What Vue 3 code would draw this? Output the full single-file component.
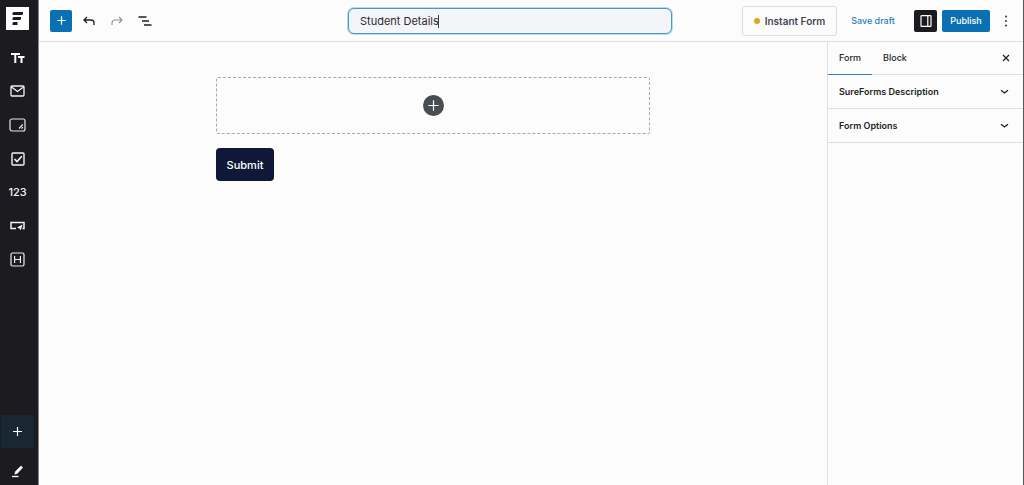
<script setup>
import { ref } from 'vue'

const title = ref('Student Details')
const tabs = ['Form', 'Block']
const activeTab = ref('Form')
const panels = ['SureForms Description', 'Form Options']
</script>

<template>
  <div class="editor">
    <aside class="rail">
      <a class="logo" href="#" aria-label="SureForms">
        <svg width="23" height="23" viewBox="0 0 23 23">
          <path d="M7.5 5h9.500v2l-1 1h-9.500v-2zM7.500 10h7.500v2l-1 1h-7.500v-2zM7.500 15h4v3h-5v-2z" fill="#1b1b20" />
        </svg>
      </a>
      <nav class="blocks" aria-label="Blocks">
        <button type="button" aria-label="Text">
          <svg width="14" height="12" viewBox="0 0 14 12" fill="none" stroke="#fff" stroke-width="2">
            <path d="M0 2h9M4.300 2v9M7 5h6.500M10.500 5v6" />
          </svg>
        </button>
        <button type="button" aria-label="Email">
          <svg width="15" height="12" viewBox="0 0 15 12" fill="none" stroke="#f4f4f4" stroke-width="1.300">
            <rect x="1" y="1" width="13" height="10" rx="1" />
            <path d="M1.200 1.800l6.300 4.600 6.300-4.600" />
          </svg>
        </button>
        <button type="button" aria-label="Textarea">
          <svg width="17" height="14" viewBox="0 0 17 14" fill="none" stroke="#e8e8e8" stroke-width="1.200">
            <rect x="1" y="1" width="15" height="12" rx="2" />
            <path d="M10 10.500l3.800-4M12.500 10.700l1.400-1.500" />
          </svg>
        </button>
        <button type="button" aria-label="Checkbox">
          <svg width="14" height="14" viewBox="0 0 14 14" fill="none" stroke="#f4f4f4" stroke-width="1.400">
            <rect x="1" y="1" width="12" height="12" rx="1" />
            <path d="M3.500 7l2.500 2.600 4.800-5.400" stroke-width="1.600" />
          </svg>
        </button>
        <button type="button" class="digits">123</button>
        <button type="button" aria-label="Button">
          <svg width="15" height="10" viewBox="0 0 15 10" fill="none" stroke="#f4f4f4" stroke-width="1.500">
            <path d="M6 7.500H1V1.500h13v6h-1.500" />
            <path d="M7 6.500L12.500 3.500 10.800 9.300 9.500 7.500z" fill="#f4f4f4" stroke="none" />
          </svg>
        </button>
        <button type="button" aria-label="Heading">
          <svg width="15" height="15" viewBox="0 0 15 15" fill="none" stroke="#eee" stroke-width="1.200">
            <rect x="1" y="1" width="13" height="13" rx="1.500" />
            <path d="M4.600 4v7M10.400 4v7M4.600 7.500h5.800" />
          </svg>
        </button>
      </nav>
      <div class="rail-end">
        <button type="button" class="rail-add" aria-label="Add block">
          <svg width="9" height="9" viewBox="0 0 9 9" stroke="#fff" stroke-width="1.200">
            <path d="M4.500 0v9M0 4.500h9" />
          </svg>
        </button>
        <button type="button" class="rail-pen" aria-label="Edit">
          <svg width="12" height="13" viewBox="0 0 12 13" fill="none" stroke="#fff">
            <path d="M2.800 9.200l.6-2.600L8.300 1.500a1 1 0 0 1 1.500 0l.3.300a1 1 0 0 1 0 1.400L5.200 8.500z" fill="#fff" stroke-width="0.500" />
            <path d="M0 11.500h6.500" stroke-width="1.300" />
          </svg>
        </button>
      </div>
    </aside>

    <div class="workspace">
      <header class="topbar">
        <div class="tools">
          <button type="button" class="inserter" aria-label="Toggle block inserter">
            <svg width="9" height="9" viewBox="0 0 9 9" stroke="#fff" stroke-width="1.200">
              <path d="M4.500 .3v8.400M.3 4.500h8.400" />
            </svg>
          </button>
          <button type="button" aria-label="Undo">
            <svg width="12" height="10" viewBox="0 0 12 10" fill="none" stroke="#1e1e1e" stroke-width="1.300">
              <path d="M4 1L1 4l3 3M1 4h7a3 3 0 0 1 3 3V9" />
            </svg>
          </button>
          <button type="button" aria-label="Redo">
            <svg width="12" height="10" viewBox="0 0 12 10" fill="none" stroke="#949494" stroke-width="1.200">
              <path d="M8 1L11 4 8 7M11 4H4A3 3 0 0 0 1 7V9" />
            </svg>
          </button>
          <button type="button" aria-label="Document overview">
            <svg width="14" height="10" viewBox="0 0 14 10" stroke="#1e1e1e" stroke-width="1.300">
              <path d="M.5 1h8M4 5h7M6 9h7.500" />
            </svg>
          </button>
        </div>
        <div class="title-field">
          <input v-model="title" type="text" aria-label="Form title" />
          <span class="caret"></span>
        </div>
        <div class="actions">
          <button type="button" class="instant"><span class="dot"></span>Instant Form</button>
          <button type="button" class="draft">Save draft</button>
          <button type="button" class="panel-toggle" aria-label="Settings">
            <svg width="12" height="12" viewBox="0 0 12 12" fill="none" stroke="#fff" stroke-width="1.200">
              <rect x="1" y=".7" width="10" height="10.600" rx=".6" />
              <path d="M7.800 1v10" />
            </svg>
          </button>
          <button type="button" class="publish">Publish</button>
          <button type="button" class="more" aria-label="Options">
            <svg width="4" height="12" viewBox="0 0 4 12" fill="#1e1e1e">
              <circle cx="2" cy="1.500" r="0.900" /><circle cx="2" cy="6" r="0.900" /><circle cx="2" cy="10.500" r="0.900" />
            </svg>
          </button>
        </div>
      </header>

      <div class="body">
        <main class="canvas">
          <div class="form">
            <div class="dropzone">
              <button type="button" aria-label="Add block">
                <svg width="11" height="11" viewBox="0 0 11 11" stroke="#fff" stroke-width="1.200">
                  <path d="M5.500 .3v10.400M.3 5.500h10.400" />
                </svg>
              </button>
            </div>
            <button type="button" class="submit">Submit</button>
          </div>
        </main>
        <aside class="settings">
          <div class="tabs" role="tablist">
            <button
              v-for="tab in tabs"
              :key="tab"
              type="button"
              role="tab"
              :aria-selected="activeTab === tab"
              :class="{ active: activeTab === tab }"
              @click="activeTab = tab"
            >{{ tab }}</button>
            <button type="button" class="close" aria-label="Close settings">
              <svg width="8" height="8" viewBox="0 0 8 8" stroke="#1e1e1e" stroke-width="1.200">
                <path d="M1 1l6 6M7 1L1 7" />
              </svg>
            </button>
          </div>
          <button v-for="panel in panels" :key="panel" type="button" class="panel">
            <span>{{ panel }}</span>
            <svg width="9" height="6" viewBox="0 0 9 6" fill="none" stroke="#1e1e1e" stroke-width="1.300">
              <path d="M1 1.200l3.500 2.800L8 1.200" />
            </svg>
          </button>
        </aside>
      </div>
    </div>
  </div>
</template>

<style>
body {
  background: #fcfcfd;
}
</style>

<style scoped>
.editor {
  display: flex;
  min-height: 100vh;
  box-sizing: border-box;
  border-right: 1px solid #55565a;
  font-family: Inter, "Liberation Sans", sans-serif;
  font-size: 10px;
  line-height: 14px;
  color: #1e1e1e;
}
.editor * {
  box-sizing: border-box;
}
button {
  display: flex;
  align-items: center;
  justify-content: center;
  margin: 0;
  padding: 0;
  border: 0;
  background: none;
  font: inherit;
  font-weight: 500;
  color: inherit;
  white-space: nowrap;
}
svg {
  display: block;
  flex: none;
}
.rail {
  display: flex;
  flex-direction: column;
  flex: none;
  width: 39px;
  padding: 7px 4px 0 1px;
  background: #1b1b20;
  border-right: 1px solid #85878b;
}
.logo {
  align-self: center;
  background: #fff;
}
.blocks {
  display: flex;
  flex-direction: column;
  height: 235px;
  margin-top: 11px;
}
.blocks button {
  flex: 1;
}
.blocks .digits {
  font-size: 11px;
  color: #f4f4f4;
}
.rail-end {
  margin-top: auto;
}
.rail-end button {
  width: 100%;
}
.rail-add {
  height: 33px;
  background: #182733;
}
.rail-pen {
  height: 37px;
  padding-top: 10px;
}
.workspace {
  display: flex;
  flex-direction: column;
  flex: 1;
  min-width: 0;
}
.topbar {
  display: flex;
  align-items: center;
  height: 42px;
  padding: 0 11px 0 11px;
  border-bottom: 1px solid #dedfe3;
}
.tools {
  display: flex;
  align-items: center;
  gap: 6px;
}
.tools button {
  width: 22px;
  height: 22px;
}
.tools .inserter,
.publish {
  background: #0b70b3;
  border-radius: 2px;
}
.title-field {
  position: relative;
  width: 324px;
  margin: 0 70px 0 auto;
}
.title-field input {
  display: block;
  width: 100%;
  height: 26px;
  padding: 0 11px;
  border: 1px solid #4797ca;
  border-radius: 6px;
  outline: 0;
  box-shadow: 0 0 0 1px #b9daed;
  background: #f4f5f9;
  font: 11px/16px Inter, "Liberation Sans", sans-serif;
  color: #2a2b2e;
}
.caret {
  position: absolute;
  top: 7px;
  left: 90px;
  width: 1px;
  height: 13px;
  background: #3c3c40;
}
.actions {
  display: flex;
  align-items: center;
}
.instant {
  gap: 5px;
  width: 95px;
  height: 30px;
  border: 1px solid #dcdde1;
  border-radius: 3px;
  font-weight: 600;
  color: #454852;
}
.dot {
  width: 6px;
  height: 6px;
  border-radius: 50%;
  background: #e3a51c;
}
.draft {
  width: 77px;
  padding-right: 5px;
  font-size: 9px;
  color: #2b7fb5;
}
.panel-toggle {
  width: 23px;
  height: 22px;
  margin-right: 5px;
  border-radius: 2px;
  background: #1b1b1f;
}
.publish {
  width: 48px;
  height: 22px;
  font-size: 9px;
  color: #fff;
}
.more {
  width: 12px;
  height: 22px;
  margin-left: 10px;
}
.body {
  display: flex;
  flex: 1;
}
.canvas {
  flex: 1;
  padding: 35px 24px;
}
.form {
  max-width: 434px;
  margin: 0 auto;
}
.dropzone {
  display: flex;
  align-items: center;
  justify-content: center;
  height: 57px;
  border: 1px dashed #a8a9ad;
  border-radius: 2px;
}
.dropzone button {
  width: 21px;
  height: 21px;
  border-radius: 50%;
  background: #484d54;
}
.submit {
  min-width: 58px;
  height: 33px;
  margin-top: 14px;
  padding: 0 10px;
  border-radius: 4px;
  background: #10183a;
  font-size: 11px;
  color: #fff;
}
.settings {
  width: 196px;
  border-left: 1px solid #dedfe3;
  font-size: 9px;
}
.tabs {
  display: flex;
  height: 33px;
  padding-right: 11px;
  border-bottom: 1px solid #dedfe3;
}
.tabs button {
  height: 32px;
  padding: 0 11px;
}
.tabs .active {
  box-shadow: 0 1px 0 #3380ae;
}
.tabs .close {
  margin-left: auto;
  padding: 0 2px;
}
.panel {
  justify-content: space-between;
  width: 100%;
  height: 34px;
  padding: 0 14px 0 11px;
  border-bottom: 1px solid #dedfe3;
  font-weight: 600;
}
</style>
